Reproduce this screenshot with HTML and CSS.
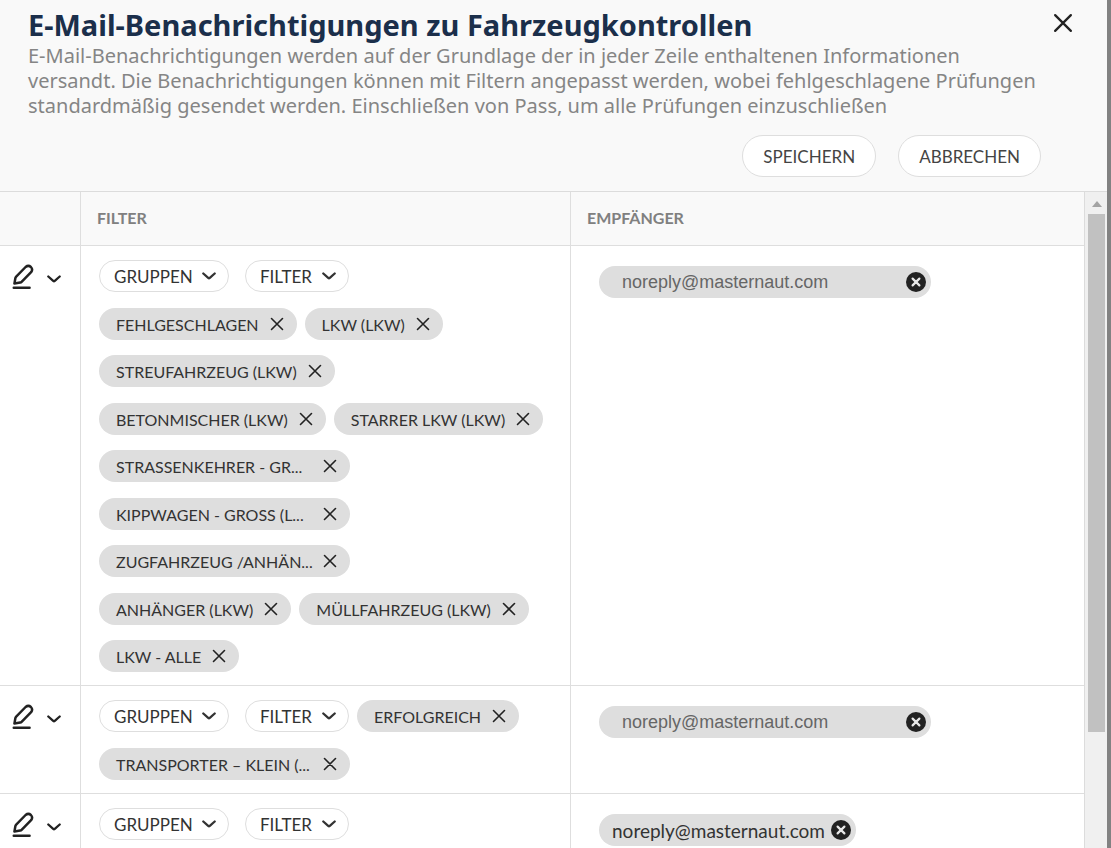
FILE: index.html
```html
<!DOCTYPE html>
<html lang="de">
<head>
  <meta charset="UTF-8">
  <meta name="viewport" content="width=device-width, initial-scale=1.0">
  <title>E-Mail-Benachrichtigungen zu Fahrzeugkontrollen</title>
  <link rel="stylesheet" href="styles.css">
</head>
<body>

<!-- Shared icons -->
<svg class="sprite" aria-hidden="true">
  <symbol id="icon-cross" viewBox="0 0 14 14">
    <path d="M1.5 1.5l11 11M12.5 1.5l-11 11" fill="none" stroke="currentColor" stroke-width="1.6" stroke-linecap="round"/>
  </symbol>
  <symbol id="icon-chevron" viewBox="0 0 14 8">
    <path d="M1.3 1.5L6.2 5.9Q7 6.5 7.8 5.9L12.7 1.5" fill="none" stroke="currentColor" stroke-width="2.3" stroke-linecap="round" stroke-linejoin="round"/>
  </symbol>
  <symbol id="icon-pencil" viewBox="0 0 22 26">
    <path d="M2.4 19.6L3.4 14Q3.6 13.2 4.2 12.6L13.6 3Q16.4 0.8 18.9 3Q21.2 5.4 19.1 8.2L9.6 17.8Q9 18.4 8.2 18.6Z" fill="none" stroke="currentColor" stroke-width="2.5" stroke-linejoin="round"/>
    <path d="M1.7 23.8H17.6" stroke="currentColor" stroke-width="2.4" stroke-linecap="round"/>
  </symbol>
  <symbol id="icon-remove" viewBox="0 0 20 20">
    <circle cx="10" cy="10" r="10" fill="#222"/>
    <path d="M6.6 6.6l6.8 6.8M13.4 6.6l-6.8 6.8" stroke="#e8e8e8" stroke-width="2.2" stroke-linecap="round"/>
  </symbol>
</svg>

<div class="modal">
  <header class="modal-header">
    <div class="title-row">
      <h1>E-Mail-Benachrichtigungen zu Fahrzeugkontrollen</h1>
      <button class="icon-btn close-btn" aria-label="Schließen"><svg><use href="#icon-cross"/></svg></button>
    </div>
    <p class="intro">E-Mail-Benachrichtigungen werden auf der Grundlage der in jeder Zeile enthaltenen Informationen versandt. Die Benachrichtigungen können mit Filtern angepasst werden, wobei fehlgeschlagene Prüfungen standardmäßig gesendet werden. Einschließen von Pass, um alle Prüfungen einzuschließen</p>
    <div class="actions">
      <button class="pill-btn">SPEICHERN</button>
      <button class="pill-btn">ABBRECHEN</button>
    </div>
  </header>

  <div class="modal-body">
    <div class="list">
      <table class="rules">
        <thead>
          <tr>
            <th class="col-edit" aria-label="Bearbeiten"></th>
            <th class="col-filter">FILTER</th>
            <th>EMPFÄNGER</th>
          </tr>
        </thead>
        <tbody id="ruleRows"></tbody>
      </table>
    </div>

    <!-- Scrollbar -->
    <div class="scrollbar" aria-hidden="true">
      <svg class="scroll-arrow" viewBox="0 0 10 6"><path d="M5 0L10 6H0Z"/></svg>
      <div class="scroll-thumb"></div>
    </div>
  </div>
</div>

<script>
  // Each inner array is one line of chips, the first line also holds the drop-downs
  const rules = [
    {
      lines: [
        [],
        ['FEHLGESCHLAGEN', 'LKW (LKW)'],
        ['STREUFAHRZEUG (LKW)'],
        ['BETONMISCHER (LKW)', 'STARRER LKW (LKW)'],
        ['STRASSENKEHRER - GR...'],
        ['KIPPWAGEN - GROSS (L...'],
        ['ZUGFAHRZEUG /ANHÄN...'],
        ['ANHÄNGER (LKW)', 'MÜLLFAHRZEUG (LKW)'],
        ['LKW - ALLE']
      ],
      email: 'noreply@masternaut.com',
      wide: true
    },
    {
      lines: [['ERFOLGREICH'], ['TRANSPORTER – KLEIN (...']],
      email: 'noreply@masternaut.com',
      wide: true
    },
    {
      lines: [[]],
      email: 'noreply@masternaut.com',
      wide: false
    }
  ];

  function icon(name) {
    return `<svg><use href="#icon-${name}"/></svg>`;
  }

  function dropdown(text, extra) {
    return `
      <span class="dropdown ${extra}">
        <select aria-label="${text}"><option>${text}</option></select>
        ${icon('chevron')}
      </span>`;
  }

  function chip(text) {
    const cut = text.endsWith('...') ? ' cut' : '';
    return `
      <span class="chip">
        <span class="chip-label${cut}">${text}</span>
        <button class="icon-btn" aria-label="${text} entfernen">${icon('cross')}</button>
      </span>`;
  }

  function renderRules() {
    document.getElementById('ruleRows').innerHTML = rules.map(rule => `
      <tr>
        <td>
          <div class="edit-tools">
            <button class="icon-btn pencil" aria-label="Bearbeiten">${icon('pencil')}</button>
            <button class="icon-btn more" aria-label="Mehr">${icon('chevron')}</button>
          </div>
        </td>
        <td class="filters">
          ${rule.lines.map((line, i) => `
            <div class="chip-line">
              ${i === 0 ? dropdown('GRUPPEN', 'groups') + dropdown('FILTER', '') : ''}
              ${line.map(chip).join('')}
            </div>`).join('')}
        </td>
        <td class="recipients">
          <div class="recipient${rule.wide ? ' wide' : ''}">
            <span>${rule.email}</span>
            <button class="icon-btn" aria-label="Empfänger entfernen">${icon('remove')}</button>
          </div>
        </td>
      </tr>`).join('');
  }

  renderRules();
</script>

</body>
</html>
```
FILE: styles.css
```css
* { box-sizing: border-box; }
body { margin: 0; font-family: Lato, "Noto Sans", sans-serif; font-size: 17px; color: #333; background: #828282; }
button, select { font: inherit; color: inherit; cursor: pointer; }
svg { display: block; }
.sprite { position: absolute; width: 0; height: 0; }

.modal {
  display: flex;
  flex-direction: column;
  height: 100vh;
  margin-right: 4px;
  overflow: hidden;
  background: #fff;
}

/* Header */
.modal-header {
  padding: 6px 34px 14px 28px;
  background: #f9f9f9;
  border-bottom: 1px solid #dcdcdc;
  font-family: "Noto Sans", sans-serif;
}
.title-row { display: flex; justify-content: space-between; align-items: flex-start; }
h1 { margin: 0; font-size: 29px; line-height: 37px; font-weight: bold; color: #1b2f4b; }
.intro { margin: 0 30px 0 0; font-size: 20px; line-height: 25px; color: #858585; }
.actions {
  display: flex;
  justify-content: flex-end;
  gap: 22px;
  margin: 17px 32px 0 0;
  font-family: Lato, "Noto Sans", sans-serif;
}
.pill-btn {
  height: 42px;
  padding: 0 20px;
  background: #fff;
  border: 1px solid #dedede;
  border-radius: 21px;
  color: #444;
}

.icon-btn { flex: none; display: block; padding: 0; background: none; border: none; color: #222; }
.close-btn { margin-top: 7px; }
.close-btn svg { width: 20px; height: 20px; }

/* List */
.modal-body { flex: 1; display: flex; min-height: 0; }
.list { flex: 1; overflow: hidden; border-right: 1px solid #dcdcdc; }
.rules { width: 100%; border-collapse: separate; border-spacing: 0; table-layout: fixed; }
.rules th {
  height: 54px;
  padding: 0 16px 2px;
  text-align: left;
  font-size: 16px;
  color: #808080;
  background: #f9f9f9;
}
.rules th, .rules td { border-bottom: 1px solid #dedede; border-right: 1px solid #dedede; }
.rules th:last-child, .rules td:last-child { border-right: none; }
.rules td { vertical-align: top; padding: 0; }
.col-edit { width: 81px; }
.col-filter { width: 490px; }

.edit-tools { display: flex; align-items: center; gap: 13px; padding: 18px 0 0 12px; }
.pencil svg { width: 22px; height: 26px; }
.more svg { width: 14px; height: 8px; }
.more { margin-top: 4px; }

/* Filters */
.rules .filters { padding: 14px 16px 13px 18px; }
.chip-line { display: flex; gap: 8px; margin-top: 15px; }
.chip-line:nth-child(even) { margin-top: 16px; }
.chip-line:first-child { margin-top: 0; }
.dropdown { position: relative; display: block; }
.dropdown.groups { margin-right: 8px; }
.dropdown select {
  display: block;
  height: 32px;
  padding: 0 35px 0 14px;
  background: #fff;
  border: 1px solid #dedede;
  border-radius: 16px;
  appearance: none;
}
.dropdown svg {
  position: absolute;
  right: 13px;
  top: 12px;
  width: 14px;
  height: 8px;
  pointer-events: none;
}
.chip {
  display: flex;
  align-items: center;
  gap: 11px;
  height: 32px;
  padding: 0 13px 0 17px;
  background: #dedede;
  border-radius: 16px;
  font-size: 16px;
}
.chip-label { white-space: nowrap; }
.chip-label.cut { width: 196px; }
.chip svg { width: 14px; height: 14px; }

/* Recipients */
.rules .recipients { padding: 20px 28px 19px; }
.recipient {
  display: flex;
  align-items: center;
  gap: 6px;
  width: fit-content;
  height: 32px;
  padding: 0 5px 0 13px;
  background: #dedede;
  border-radius: 16px;
  font-size: 19px;
}
.recipient.wide {
  gap: 78px;
  padding-left: 23px;
  font-family: "Liberation Sans", Arial, sans-serif;
  font-size: 18px;
  color: #666;
}
.recipient svg { width: 20px; height: 20px; }

/* Scrollbar */
.scrollbar { width: 22px; padding: 9px 2px 0 3px; background: #f0f0f0; }
.scroll-arrow { width: 10px; height: 6px; margin: 0 auto 7px; fill: #a3a3a3; }
.scroll-thumb { height: 80%; background: #c1c1c1; }
```
